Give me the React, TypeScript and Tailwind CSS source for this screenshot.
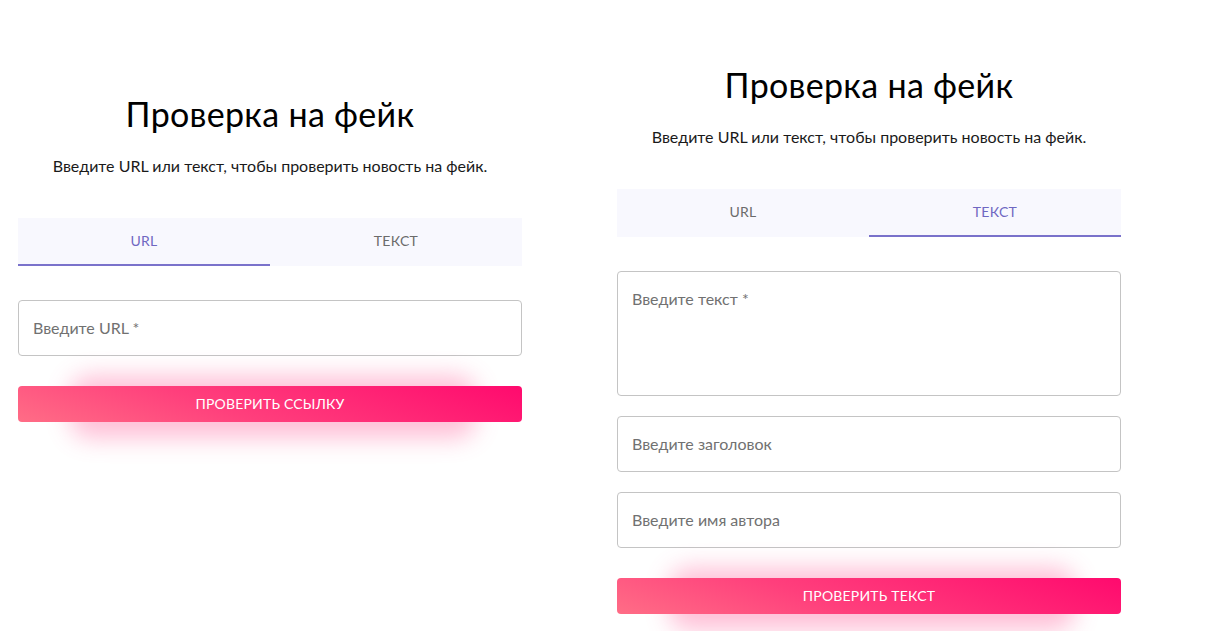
import React from "react";

const font = { fontFamily: "Lato, 'Noto Sans', sans-serif" };

function Tabs({ active }: { active: "url" | "text" }) {
  const tab = (label: string, on: boolean) => (
    <div className="relative flex h-12 flex-1 items-center justify-center pb-[3px]">
      <span className={`text-[14px] font-normal uppercase tracking-[0.3px] ${on ? "text-[#6f67c2]" : "text-[#6b6b6b]"}`}>{label}</span>
      {on && <div className="absolute bottom-0 left-0 right-0 h-[2px] bg-[#7a72cb]" />}
    </div>
  );
  return (
    <div className="flex w-full bg-[#f8f8fe]">
      {tab("URL", active === "url")}
      {tab("Текст", active === "text")}
    </div>
  );
}

function Field({ label, tall }: { label: string; tall?: boolean }) {
  return (
    <div className={`w-full rounded-[4px] border border-[#c4c4c4] bg-white px-[14px] ${tall ? "h-[125px] pt-[15px]" : "flex h-14 items-center pb-[2px]"}`}>
      <span className="text-[16px] leading-[23px] text-[#717171]">{label}</span>
    </div>
  );
}

function GlowButton({ label }: { label: string }) {
  return (
    <div className="relative w-full">
      <div className="absolute left-[52px] right-[46px] top-[-10px] bottom-[-16px] rounded-[20px] bg-[#ff5f9a] opacity-40 blur-[12px]" />
      <div className="relative flex h-9 w-full items-center justify-center rounded-[4px] pb-[2px] bg-[linear-gradient(20deg,#ff6d86_0%,#ff3f7c_40%,#ff0a6e_100%)]">
        <span className="text-[14px] font-normal uppercase tracking-[0.2px] text-white">{label}</span>
      </div>
    </div>
  );
}

function Header() {
  return (
    <>
      <h1 className="text-center text-[34px] font-normal leading-[42px] tracking-[0.3px] text-black">Проверка на фейк</h1>
      <p className="mt-[19px] text-center text-[16px] leading-6 text-[#1a1a1a]">
        Введите URL или текст, чтобы проверить новость на фейк.
      </p>
    </>
  );
}

export default function App() {
  return (
    <div className="flex h-[631px] w-[1207px] overflow-hidden bg-white" style={font}>
      <div className="ml-[18px] flex w-[504px] flex-col pt-[93px]">
        <Header />
        <div className="mt-[40px]">
          <Tabs active="url" />
        </div>
        <div className="mt-[34px]">
          <Field label="Введите URL *" />
        </div>
        <div className="mt-[30px]">
          <GlowButton label="Проверить ссылку" />
        </div>
      </div>
      <div className="ml-[95px] flex w-[504px] flex-col pt-[64px]">
        <Header />
        <div className="mt-[40px]">
          <Tabs active="text" />
        </div>
        <div className="mt-[34px]">
          <Field label="Введите текст *" tall />
        </div>
        <div className="mt-[20px]">
          <Field label="Введите заголовок" />
        </div>
        <div className="mt-[20px]">
          <Field label="Введите имя автора" />
        </div>
        <div className="mt-[30px]">
          <GlowButton label="Проверить текст" />
        </div>
      </div>
    </div>
  );
}
